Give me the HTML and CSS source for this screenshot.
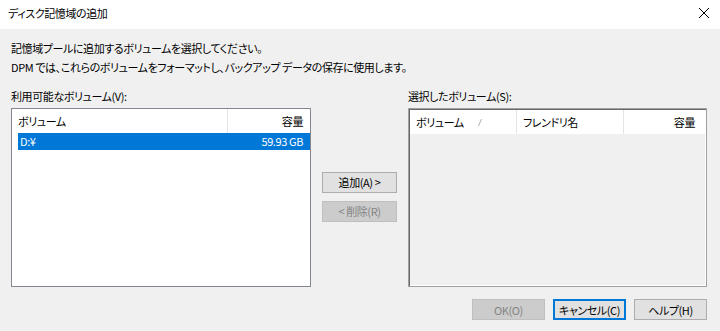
FILE: index.html
```html
<!DOCTYPE html>
<html lang="ja">
<head>
  <meta charset="UTF-8" />
  <title>ディスク記憶域の追加</title>
  <link rel="stylesheet" href="styles.css">
</head>
<body>
  <div class="titlebar">
    <span class="title">ディスク記憶域の追加</span>
    <svg class="close" width="12" height="12" viewBox="0 0 12 12">
      <path d="M1 1 L11 11 M11 1 L1 11" stroke="#000" stroke-width="1" fill="none" />
    </svg>
  </div>

  <div class="dialog">
    <p class="intro">記憶域プールに追加するボリュームを選択してください。<br>DPM では、これらのボリュームをフォーマットし、バックアップ データの保存に使用します。</p>

    <div class="panes">
      <div class="label">利用可能なボリューム(V):</div>
      <div></div>
      <div class="label">選択したボリューム(S):</div>

      <div class="list">
        <div class="head">
          <div class="col col-name">ボリューム</div>
          <div class="col col-size">容量</div>
        </div>
        <div class="row selected">
          <span>D:¥</span>
          <span>59.93 GB</span>
        </div>
      </div>

      <div class="move">
        <button class="btn">追加(A) &gt;</button>
        <button class="btn" disabled>&lt; 削除(R)</button>
      </div>

      <div class="list sunken">
        <div class="head">
          <div class="col col-vol">ボリューム
            <svg class="sort" width="4" height="7" viewBox="0 0 4 7"><path d="M3.5 0 L0.5 7" stroke="#b0b0b0" fill="none" /></svg>
          </div>
          <div class="col col-friendly">フレンドリ名</div>
          <div class="col col-cap">容量</div>
        </div>
      </div>
    </div>

    <div class="actions">
      <button class="btn" disabled>OK(O)</button>
      <button class="btn focused">キャンセル(C)</button>
      <button class="btn">ヘルプ(H)</button>
    </div>
  </div>
</body>
</html>
```

FILE: styles.css
```css
body {
  margin: 0;
  width: 720px;
  height: 331px;
  overflow: hidden;
  background: #f0f0f0;
  font-family: "Noto Sans CJK JP", "Liberation Sans", sans-serif;
  font-size: 11px;
  letter-spacing: -0.4px;
  font-feature-settings: "palt";
  color: #000;
}

.titlebar {
  height: 29px;
  background: #fff;
  display: flex;
  align-items: center;
  justify-content: space-between;
  padding: 0 10px 3px 8px;
  box-sizing: border-box;
}

.dialog {
  padding: 10px 13px 0 11px;
}

.intro {
  margin: 0;
  line-height: 19px;
}

.panes {
  display: grid;
  grid-template-columns: 300px 75px 299px;
  grid-template-rows: 19px 179px;
  column-gap: 11px;
  row-gap: 2px;
  margin-top: 10px;
}

.label {
  line-height: 19px;
}

.list {
  background: #fff;
  border: 1px solid #828790;
  box-sizing: border-box;
}

.list.sunken {
  background: #f0f0f0;
  border: 1px solid #a0a0a0;
  box-shadow: inset 1px 1px #696969, inset -1px -1px #fff;
  padding: 1px;
}

.head {
  display: flex;
  height: 24px;
  background: #fff;
}

.col {
  display: flex;
  align-items: center;
  padding: 0 6px;
  box-sizing: border-box;
  border-right: 1px solid #e5e5e5;
  white-space: nowrap;
}

.col-name { width: 216px; }
.col-size { flex: 1; justify-content: flex-end; border-right: none; padding-right: 7px; }

.col-vol { width: 107px; }
.col-friendly { width: 107px; }
.col-cap { width: 77px; justify-content: flex-end; border-right: none; padding-right: 6px; }

.sort {
  margin-left: 14px;
}

.row {
  display: flex;
  justify-content: space-between;
  height: 17px;
  line-height: 17px;
  margin: 0 0 0 6px;
  padding: 0 7px 0 2px;
}

.row.selected {
  background: #0078d7;
  color: #fff;
}

.move {
  display: flex;
  flex-direction: column;
  justify-content: center;
  gap: 8px;
  padding-bottom: 2px;
}

.btn {
  font: inherit;
  letter-spacing: inherit;
  font-feature-settings: "palt";
  white-space: nowrap;
  width: 75px;
  height: 21px;
  padding: 0;
  background: #e1e1e1;
  border: 1px solid #adadad;
  color: #000;
}

.btn:disabled {
  background: #cccccc;
  border-color: #bfbfbf;
  color: #838383;
}

.btn.focused {
  border: 2px solid #0078d7;
}

.actions {
  display: flex;
  justify-content: flex-end;
  gap: 8px;
  margin-top: 12px;
}

.actions .btn {
  width: 73px;
  height: 21px;
}
```
